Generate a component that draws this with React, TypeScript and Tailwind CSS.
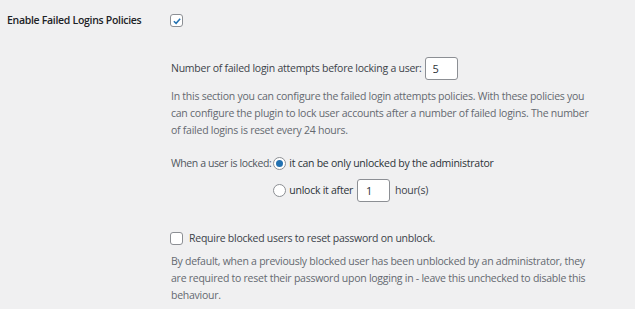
import { useState } from "react";

const font = { fontFamily: '"Open Sans", "Noto Sans", sans-serif' };

const Check = ({ checked, onToggle }: { checked: boolean; onToggle: () => void }) => (
  <button
    onClick={onToggle}
    className="flex h-[13px] w-[13px] shrink-0 items-center justify-center rounded-[3px] border border-[#8c8f94] bg-white"
  >
    {checked && (
      <svg viewBox="0 0 12 12" className="h-[10px] w-[10px]">
        <path d="M2.2 6.3 L4.9 8.8 L9.8 3.2" fill="none" stroke="#2271b1" strokeWidth="1.8" />
      </svg>
    )}
  </button>
);

const Radio = ({ on, onPick }: { on: boolean; onPick: () => void }) => (
  <button
    onClick={onPick}
    className="flex h-[13px] w-[13px] shrink-0 items-center justify-center rounded-full border border-[#8c8f94] bg-white"
  >
    {on && <span className="h-[7px] w-[7px] rounded-full bg-[#2271b1]" />}
  </button>
);

export default function App() {
  const [enabled, setEnabled] = useState(true);
  const [attempts, setAttempts] = useState("5");
  const [mode, setMode] = useState<"admin" | "timer">("admin");
  const [hours, setHours] = useState("1");
  const [requireReset, setRequireReset] = useState(false);

  return (
    <div
      style={font}
      className="min-h-screen w-full bg-[#f0f0f1] text-[10.5px] leading-[17px] tracking-[-0.25px] text-[#3c434a]"
    >
      <div className="flex items-center pt-[12px]">
        <div className="w-[170px] pl-[7px] font-semibold tracking-[-0.3px] text-[#1d2327]">
          Enable Failed Logins Policies
        </div>
        <Check checked={enabled} onToggle={() => setEnabled(!enabled)} />
      </div>

      <div className="ml-[171px] mt-[28px]">
        <div className="flex items-center gap-[3px]">
          <span>Number of failed login attempts before locking a user:</span>
          <input
            value={attempts}
            onChange={(e) => setAttempts(e.target.value)}
            className="h-[23px] w-[33px] rounded-[3px] border border-[#8c8f94] bg-white px-[7px] text-[11px] text-[#2c3338] outline-none"
          />
        </div>
        <p className="mt-[8px] text-[#646970]">
          In this section you can configure the failed login attempts policies. With these policies you
          <br />
          can configure the plugin to lock user accounts after a number of failed logins. The number
          <br />
          of failed logins is reset every 24 hours.
        </p>

        <div className="mt-[14px] flex items-start">
          <span className="pt-[2px] tracking-[-0.4px] text-[#50575e]">When a user is locked:</span>
          <div className="ml-[2px] flex flex-col">
            <label className="flex h-[21px] items-center gap-[3px] text-[#2c3338]">
              <Radio on={mode === "admin"} onPick={() => setMode("admin")} />
              <span>it can be only unlocked by the administrator</span>
            </label>
            <label className="mt-[5px] flex items-center gap-[3px] text-[#2c3338]">
              <Radio on={mode === "timer"} onPick={() => setMode("timer")} />
              <span>unlock it after</span>
              <input
                value={hours}
                onChange={(e) => setHours(e.target.value)}
                className="ml-[1px] h-[23px] w-[33px] rounded-[3px] border border-[#8c8f94] bg-white px-[8px] text-[11px] outline-none"
              />
              <span className="ml-[2px] text-[#3c434a]">hour(s)</span>
            </label>
          </div>
        </div>

        <label className="mt-[28px] flex items-center gap-[6px]">
          <span className="-ml-[1px]">
            <Check checked={requireReset} onToggle={() => setRequireReset(!requireReset)} />
          </span>
          <span>Require blocked users to reset password on unblock.</span>
        </label>
        <p className="mt-[6px] text-[#646970]">
          By default, when a previously blocked user has been unblocked by an administrator, they
          <br />
          are required to reset their password upon logging in - leave this unchecked to disable this
          <br />
          behaviour.
        </p>
      </div>
    </div>
  );
}
